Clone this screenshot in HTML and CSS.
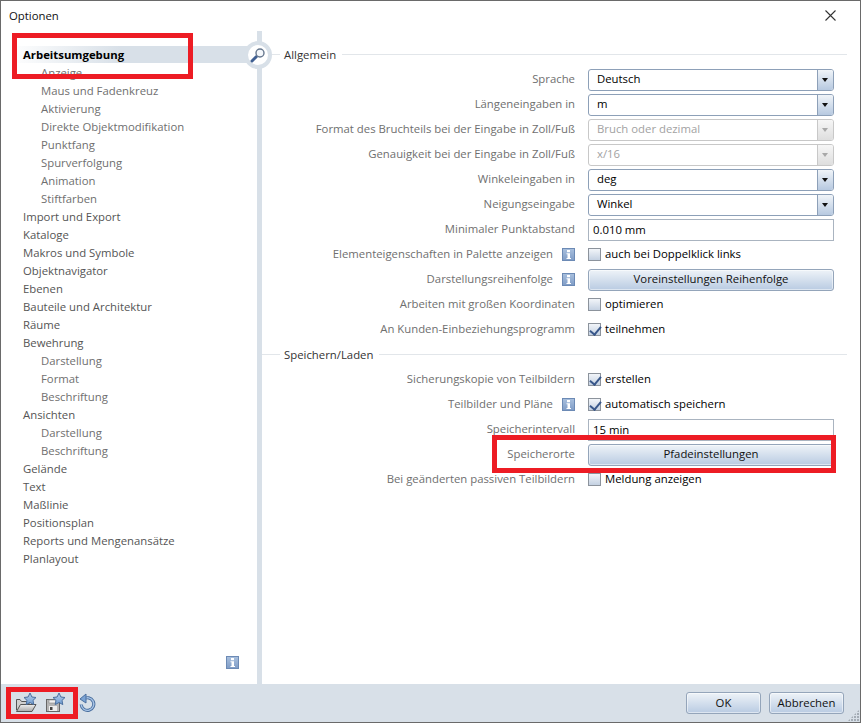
FILE: index.html
```html
<!DOCTYPE html>
<html lang="de">
<head>
    <meta charset="UTF-8">
    <title>Optionen</title>
    <link rel="stylesheet" href="styles.css">
</head>
<body>
<svg class="defs" width="0" height="0">
    <defs>
        <linearGradient id="infoFill" x1="0" y1="0" x2="0" y2="1">
            <stop offset="0" stop-color="#a9c0de"/>
            <stop offset="1" stop-color="#7f9cc6"/>
        </linearGradient>
        <linearGradient id="starFill" x1="0" y1="0" x2="0" y2="1">
            <stop offset="0" stop-color="#b9d2ee"/>
            <stop offset="1" stop-color="#6f9bd0"/>
        </linearGradient>
        <linearGradient id="folderFill" x1="0" y1="0" x2="0" y2="1">
            <stop offset="0" stop-color="#f0f0f0"/>
            <stop offset="1" stop-color="#a8a8a8"/>
        </linearGradient>
        <symbol id="info" viewBox="0 0 13 13">
            <rect x="0.5" y="0.5" width="12" height="12" fill="url(#infoFill)" stroke="#6c8ab5"/>
            <rect x="5" y="2" width="3" height="2.2" fill="#fff"/>
            <path d="M4.5 5.2H8V10H9V11H4.5V10H5.5V6.2H4.5Z" fill="#fff"/>
        </symbol>
        <symbol id="star" viewBox="0 0 14 14">
            <path d="M7 1L8.9 5L13 5.5L10 8.4L10.8 12.6L7 10.5L3.2 12.6L4 8.4L1 5.5L5.1 5Z" fill="url(#starFill)" stroke="#4a6f9f"/>
        </symbol>
    </defs>
</svg>

<div class="window">
    <div class="titlebar">
        <span class="title">Optionen</span>
        <svg class="close" width="11" height="11" viewBox="0 0 11 11">
            <path d="M0.5 0.5L10.5 10.5M10.5 0.5L0.5 10.5" stroke="#333" stroke-width="1.1" fill="none"/>
        </svg>
    </div>

    <div class="content">
        <nav class="nav">
            <ul class="tree">
                <li class="active">Arbeitsumgebung</li>
                <li class="sub">Anzeige</li>
                <li class="sub">Maus und Fadenkreuz</li>
                <li class="sub">Aktivierung</li>
                <li class="sub">Direkte Objektmodifikation</li>
                <li class="sub">Punktfang</li>
                <li class="sub">Spurverfolgung</li>
                <li class="sub">Animation</li>
                <li class="sub">Stiftfarben</li>
                <li>Import und Export</li>
                <li>Kataloge</li>
                <li>Makros und Symbole</li>
                <li>Objektnavigator</li>
                <li>Ebenen</li>
                <li>Bauteile und Architektur</li>
                <li>Räume</li>
                <li>Bewehrung</li>
                <li class="sub">Darstellung</li>
                <li class="sub">Format</li>
                <li class="sub">Beschriftung</li>
                <li>Ansichten</li>
                <li class="sub">Darstellung</li>
                <li class="sub">Beschriftung</li>
                <li>Gelände</li>
                <li>Text</li>
                <li>Maßlinie</li>
                <li>Positionsplan</li>
                <li>Reports und Mengenansätze</li>
                <li>Planlayout</li>
            </ul>
            <svg class="nav-info" width="13" height="13"><use href="#info"/></svg>
        </nav>

        <div class="divider">
            <div class="search">
                <svg width="18" height="18" viewBox="0 0 18 18">
                    <path d="M3 15L7.5 10.5" stroke="#3f5f92" stroke-width="3" stroke-linecap="round"/>
                    <circle cx="11" cy="7" r="4" fill="#f4f7fb" stroke="#66778e" stroke-width="1.4"/>
                </svg>
            </div>
        </div>

        <main class="pane">
            <div class="section-head"><span>Allgemein</span></div>
            <div class="form">
                <label>Sprache</label>
                <div class="select"><span>Deutsch</span><i></i></div>

                <label>Längeneingaben in</label>
                <div class="select"><span>m</span><i></i></div>

                <label>Format des Bruchteils bei der Eingabe in Zoll/Fuß</label>
                <div class="select disabled"><span>Bruch oder dezimal</span><i></i></div>

                <label>Genauigkeit bei der Eingabe in Zoll/Fuß</label>
                <div class="select disabled"><span>x/16</span><i></i></div>

                <label>Winkeleingaben in</label>
                <div class="select"><span>deg</span><i></i></div>

                <label>Neigungseingabe</label>
                <div class="select"><span>Winkel</span><i></i></div>

                <label>Minimaler Punktabstand</label>
                <div class="input">0.010 mm</div>

                <label>Elementeigenschaften in Palette anzeigen <svg class="info" width="13" height="13"><use href="#info"/></svg></label>
                <div class="check"><b></b>auch bei Doppelklick links</div>

                <label>Darstellungsreihenfolge <svg class="info" width="13" height="13"><use href="#info"/></svg></label>
                <div class="btn">Voreinstellungen Reihenfolge</div>

                <label>Arbeiten mit großen Koordinaten</label>
                <div class="check"><b></b>optimieren</div>

                <label>An Kunden-Einbeziehungsprogramm</label>
                <div class="check on"><b></b>teilnehmen</div>
            </div>

            <div class="section-head"><span>Speichern/Laden</span></div>
            <div class="form">
                <label>Sicherungskopie von Teilbildern</label>
                <div class="check on"><b></b>erstellen</div>

                <label>Teilbilder und Pläne <svg class="info" width="13" height="13"><use href="#info"/></svg></label>
                <div class="check on"><b></b>automatisch speichern</div>

                <label>Speicherintervall</label>
                <div class="input">15 min</div>

                <label>Speicherorte</label>
                <div class="btn">Pfadeinstellungen</div>

                <label>Bei geänderten passiven Teilbildern</label>
                <div class="check"><b></b>Meldung anzeigen</div>
            </div>
        </main>
    </div>

    <footer class="footer">
        <div class="tools">
            <svg class="tool" width="24" height="22" viewBox="0 0 24 22">
                <path d="M2.5 18V7.5H6L7.5 9.5H15V12" fill="#cfcfcf" stroke="#555"/>
                <path d="M2.5 19.5L6.5 12.5H22L18 19.5Z" fill="url(#folderFill)" stroke="#555"/>
                <use href="#star" x="9" y="0" width="14" height="14"/>
            </svg>
            <svg class="tool" width="24" height="22" viewBox="0 0 24 22">
                <rect x="2.5" y="7.5" width="13" height="12" fill="#b5b5b5" stroke="#666"/>
                <rect x="5" y="8" width="7" height="3" fill="#f1f1f1" stroke="#888" stroke-width="0.6"/>
                <rect x="5" y="14" width="8" height="5" fill="#eeeeee"/>
                <rect x="6" y="15" width="2.5" height="3" fill="#444"/>
                <use href="#star" x="8" y="0" width="14" height="14"/>
            </svg>
            <svg class="undo" width="18" height="20" viewBox="0 0 18 20">
                <path d="M5.5 6.2A6.3 6.3 0 1 1 3.2 11.5" fill="none" stroke="#4a6f9f" stroke-width="3.2"/>
                <path d="M5.5 6.2A6.3 6.3 0 1 1 3.2 11.5" fill="none" stroke="#a8c4e6" stroke-width="1.4"/>
                <path d="M8 1L8 10L2 6Z" fill="#7ba3d4" stroke="#4a6f9f"/>
            </svg>
        </div>
        <div class="actions">
            <div class="btn small">OK</div>
            <div class="btn small">Abbrechen</div>
        </div>
        <div class="grip"></div>
    </footer>

    <!-- red markers drawn over the screenshot -->
    <div class="marker marker-nav"></div>
    <div class="marker marker-path"></div>
    <div class="marker marker-tools"></div>
</div>
</body>
</html>
```

FILE: styles.css
```css
* {
    box-sizing: border-box;
}

html, body {
    margin: 0;
    padding: 0;
}

body {
    font-family: "Open Sans", "Noto Sans", Arial, sans-serif;
    font-size: 11.35px;
    color: #000;
    background: #fff;
}

.defs {
    position: absolute;
}

.window {
    position: relative;
    width: 861px;
    height: 723px;
    display: flex;
    flex-direction: column;
    border: 1px solid #6a6a6a;
    background: #fff;
    overflow: hidden;
}

/* Title bar */
.titlebar {
    height: 30px;
    flex: none;
    display: flex;
    align-items: center;
    justify-content: space-between;
    padding: 0 24px 2px 8px;
}

.title {
    color: #111;
}

/* Body */
.content {
    flex: 1;
    display: flex;
    min-height: 0;
}

.nav {
    width: 256px;
    flex: none;
    position: relative;
    padding-top: 15px;
}

.tree {
    list-style: none;
    margin: 0;
    padding: 0;
}

.tree li {
    height: 18px;
    line-height: 17px;
    padding-left: 22px;
    color: #555;
    white-space: nowrap;
}

.tree li.sub {
    padding-left: 40px;
    color: #6f6f6f;
}

.tree li.active {
    height: 17px;
    margin-bottom: 1px;
    font-weight: bold;
    color: #000;
    background: linear-gradient(to right, #fff 8px, #d8e0e8 120px);
}

.nav-info {
    position: absolute;
    left: 225px;
    bottom: 15px;
}

.divider {
    width: 5px;
    flex: none;
    background: #d8e0e8;
    position: relative;
    z-index: 1;
}

.search {
    position: absolute;
    left: -13px;
    top: 10px;
    width: 28px;
    height: 28px;
    border-radius: 50%;
    background: #fff;
    border: 4px solid #d8e0e8;
    display: flex;
    align-items: center;
    justify-content: center;
}

.search svg {
    flex: none;
}

.pane {
    flex: 1;
    padding: 11px 26px 0 0;
}

.section-head {
    height: 25px;
    display: flex;
    align-items: center;
    margin-right: -13px;
    color: #333;
}

.section-head span {
    padding: 0 6px 1px 4px;
    white-space: nowrap;
}

.section-head::before {
    content: "";
    flex: 0 0 18px;
    height: 1px;
    background: #e2e6ea;
}

.section-head::after {
    content: "";
    flex: 1;
    height: 1px;
    background: #e2e6ea;
}

.form {
    display: grid;
    grid-template-columns: 1fr 246px;
    grid-auto-rows: 25px;
    column-gap: 13px;
    align-items: center;
}

.form label {
    display: flex;
    align-items: center;
    justify-content: flex-end;
    gap: 9px;
    padding-bottom: 2px;
    color: #6f6f6f;
    white-space: nowrap;
}

.info {
    flex: none;
    margin-top: 2px;
}

/* Controls */
.select {
    height: 22px;
    display: flex;
    align-items: stretch;
    border: 1px solid #8da0b8;
    border-radius: 3px;
    background: #fff;
}

.select span {
    flex: 1;
    padding-left: 8px;
    line-height: 17px;
}

.select i {
    width: 16px;
    position: relative;
    border-left: 1px solid #8da0b8;
    border-radius: 0 2px 2px 0;
    background: linear-gradient(to bottom, #f0f4f8, #b7c9e0);
}

.select i::after {
    content: "";
    position: absolute;
    left: 4px;
    top: 8px;
    border: 3px solid transparent;
    border-top: 4px solid #111;
    border-bottom: 0;
}

.select.disabled {
    border-color: #c8c8c8;
    color: #a2a2a2;
}

.select.disabled i {
    border-left-color: #c8c8c8;
    background: linear-gradient(to bottom, #f6f6f6, #dedede);
}

.select.disabled i::after {
    border-top-color: #a8a8a8;
}

.input {
    height: 22px;
    line-height: 19px;
    padding-left: 4px;
    border: 1px solid #aab4c0;
    background: #fff;
}

.check {
    display: flex;
    align-items: center;
    padding-bottom: 2px;
    white-space: nowrap;
}

.check b {
    width: 13px;
    height: 13px;
    flex: none;
    margin: 2px 4px 0 0;
    position: relative;
    border: 1px solid #8c939c;
    background: linear-gradient(to bottom, #f2f5f9, #c4d1e2);
}

.check.on b::after {
    content: "";
    position: absolute;
    left: 3px;
    top: 0;
    width: 5px;
    height: 9px;
    border: solid #38578a;
    border-width: 0 2px 2px 0;
    transform: rotate(40deg);
}

.btn {
    height: 22px;
    line-height: 18px;
    text-align: center;
    border: 1px solid #94a5ba;
    border-radius: 3px;
    background: linear-gradient(to bottom, #eef3f8, #b9cbe2);
    box-shadow: inset 0 0 0 1px #ffffff80;
    color: #111;
}

/* Footer */
.footer {
    height: 38px;
    flex: none;
    position: relative;
    display: flex;
    align-items: center;
    justify-content: space-between;
    padding: 0 16px 0 13px;
    background: #d8e0e8;
}

.tools {
    display: flex;
    align-items: center;
    gap: 6px;
}

.undo {
    margin-left: 4px;
}

.actions {
    display: flex;
    gap: 8px;
}

.btn.small {
    width: 75px;
    line-height: 20px;
}

.grip {
    position: absolute;
    right: 1px;
    bottom: 1px;
    width: 11px;
    height: 11px;
    background: radial-gradient(circle at 1px 1px, #a4acb5 1px, transparent 1px) 0 0 / 3px 3px;
    clip-path: polygon(100% 0, 100% 100%, 0 100%);
}

/* Red markers */
.marker {
    position: absolute;
    border: 5px solid #ed1c24;
}

.marker-nav {
    left: 11px;
    top: 32px;
    width: 181px;
    height: 46px;
}

.marker-path {
    left: 491px;
    top: 434px;
    width: 344px;
    height: 38px;
}

.marker-tools {
    left: 5px;
    top: 686px;
    width: 72px;
    height: 32px;
}
```
